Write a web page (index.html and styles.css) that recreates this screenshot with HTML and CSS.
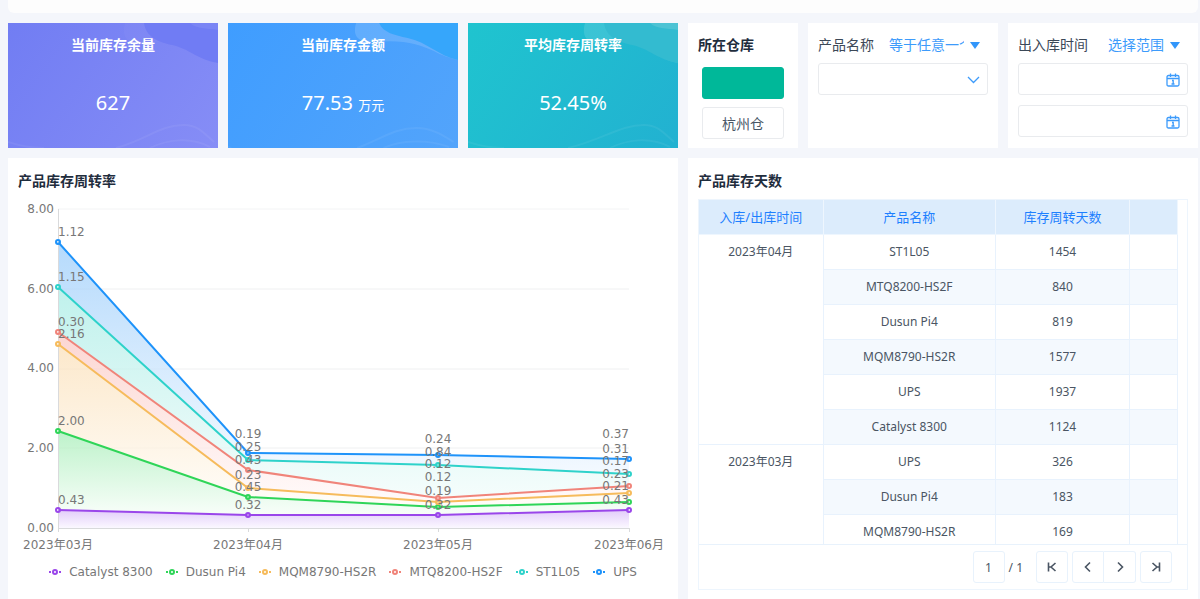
FILE: index.html
```html
<!DOCTYPE html>
<html lang="zh-CN">
<head>
  <meta charset="UTF-8">
  <meta name="viewport" content="width=device-width, initial-scale=1.0">
  <title>产品库存看板</title>
  <link rel="stylesheet" href="styles.css">
</head>
<body>

  <header class="topbar"></header>

  <main class="board">
    <section class="card card-purple">
      <svg class="wave" viewBox="0 0 210 125" preserveAspectRatio="none" aria-hidden="true">
        <path class="band" d="M117 0C113 14 120 22 134 20C160 16 176 22 188 30C196 36 203 39 210 40V0Z"/>
        <path class="pool" d="M136 0C138 14 150 19 164 22C182 26 190 37 210 40V0Z"/>
        <path class="tip" d="M182 0C188 6 198 5 210 7V0Z"/>
        <path class="line" d="M0 119C12 123 24 125 36 125M108 125C140 116 152 102 176 102C190 102 196 110 206 119M142 125C158 117 182 113 202 124"/>
      </svg>
      <h2>当前库存余量</h2>
      <p class="num">627</p>
    </section>

    <section class="card card-blue">
      <svg class="wave" viewBox="0 0 210 125" preserveAspectRatio="none" aria-hidden="true">
        <path class="band" d="M117 0C113 14 120 20 134 19C160 16 176 22 188 28C196 33 203 35 210 37V0Z"/>
        <path class="pool" d="M138 0C142 10 152 12 164 15C182 19 192 33 210 37V0Z"/>
        <path class="line" d="M0 124L3 125M118 125C140 116 152 105 172 105C186 105 196 112 206 119M142 125C158 117 182 116 202 124"/>
      </svg>
      <h2>当前库存金额</h2>
      <p class="num">77.53 <small>万元</small></p>
    </section>

    <section class="card card-teal">
      <svg class="wave" viewBox="0 0 210 125" preserveAspectRatio="none" aria-hidden="true">
        <path class="band" d="M117 0C113 14 120 22 134 20C160 16 176 22 188 30C196 36 203 39 210 40V0Z"/>
        <path class="pool" d="M136 0C138 14 150 19 164 22C182 26 190 37 210 40V0Z"/>
        <path class="tip" d="M182 0C188 6 198 5 210 7V0Z"/>
        <path class="line" d="M0 119C12 123 24 125 36 125M100 125C136 116 152 102 176 102C190 102 196 110 206 119M142 125C158 117 182 113 202 124"/>
      </svg>
      <h2>平均库存周转率</h2>
      <p class="num">52.45%</p>
    </section>

    <section class="filter">
      <h2>所在仓库</h2>
      <div class="tags">
        <button type="button" class="tag active" aria-label="全部仓库"></button>
        <button type="button" class="tag">杭州仓</button>
      </div>
    </section>

    <section class="filter">
      <div class="filter-head">
        <label for="product">产品名称</label>
        <button type="button" class="cond"><span>等于任意一个</span><i class="caret"></i></button>
      </div>
      <div class="field">
        <select id="product"><option></option></select>
        <svg class="field-icon" viewBox="0 0 14 14" aria-hidden="true"><path d="M2 4l5.500 5.500L13 4"/></svg>
      </div>
    </section>

    <section class="filter">
      <div class="filter-head">
        <label for="dateFrom">出入库时间</label>
        <button type="button" class="cond"><span>选择范围</span><i class="caret"></i></button>
      </div>
      <div class="field">
        <input type="text" id="dateFrom">
        <svg class="field-icon" viewBox="0 0 14 14" aria-hidden="true"><path d="M2.500 2.500h9q1.500 0 1.500 1.500v7.500q0 1.500-1.500 1.500h-9Q1 13 1 11.500V4q0-1.500 1.500-1.500zM1 5.500h12M4.500 .5v3.500M9.500 .5v3.500M6 7.500h1.200v3.500M5.500 11h3"/></svg>
      </div>
      <div class="field">
        <input type="text" id="dateTo" aria-label="结束时间">
        <svg class="field-icon" viewBox="0 0 14 14" aria-hidden="true"><path d="M2.500 2.500h9q1.500 0 1.500 1.500v7.500q0 1.500-1.500 1.500h-9Q1 13 1 11.500V4q0-1.500 1.500-1.500zM1 5.500h12M4.500 .5v3.500M9.500 .5v3.500M6 7.500h1.200v3.500M5.500 11h3"/></svg>
      </div>
    </section>

    <section class="panel panel-chart">
      <h2>产品库存周转率</h2>
      <svg class="chart" viewBox="0 0 670 358" role="img" aria-label="产品库存周转率">
        <defs>
          <linearGradient id="gUps" x1="0" y1="0" x2="0" y2="1"><stop offset="0" stop-color="#b5dafc"/><stop offset="1" stop-color="#f3f9ff"/></linearGradient>
          <linearGradient id="gSt" x1="0" y1="0" x2="0" y2="1"><stop offset="0" stop-color="#bff1ec"/><stop offset="1" stop-color="#f5fdfc"/></linearGradient>
          <linearGradient id="gMtq" x1="0" y1="0" x2="0" y2="1"><stop offset="0" stop-color="#fcd6d2"/><stop offset="1" stop-color="#fffafa"/></linearGradient>
          <linearGradient id="gMqm" x1="0" y1="0" x2="0" y2="1"><stop offset="0" stop-color="#fce8cb"/><stop offset="1" stop-color="#fffdf9"/></linearGradient>
          <linearGradient id="gPi" x1="0" y1="0" x2="0" y2="1"><stop offset="0" stop-color="#bdf2ca"/><stop offset="1" stop-color="#f8fef9"/></linearGradient>
          <linearGradient id="gCat" x1="0" y1="0" x2="0" y2="1"><stop offset="0" stop-color="#e2cdfa"/><stop offset="1" stop-color="#fbf8ff"/></linearGradient>
        </defs>

        <path class="grid" d="M50 9H621M50 89H621M50 169H621M50 248H621"/>

        <path fill="url(#gUps)" d="M50 42L240 253L430 255L621 259V274L430 265L240 260L50 87Z"/>
        <path fill="url(#gSt)" d="M50 87L240 260L430 265L621 274V286L430 298L240 270L50 132Z"/>
        <path fill="url(#gMtq)" d="M50 132L240 270L430 298L621 286V293L430 302L240 288L50 144Z"/>
        <path fill="url(#gMqm)" d="M50 144L240 288L430 302L621 293V302L430 307L240 297L50 231Z"/>
        <path fill="url(#gPi)" d="M50 231L240 297L430 307L621 302V310L430 315L240 315L50 310Z"/>
        <path fill="url(#gCat)" d="M50 310L240 315L430 315L621 310V328H50Z"/>
        <path class="grid over" d="M50 89H621M50 169H621M50 248H621"/>

        <path class="axis" d="M50.500 9V332M50 328.500H621M240.500 328V332M430.500 328V332M621.500 328V332"/>

        <g class="series c-cat"><path d="M50 310L240 315L430 315L621 310"/><circle cx="50" cy="310" r="2"/><circle cx="240" cy="315" r="2"/><circle cx="430" cy="315" r="2"/><circle cx="621" cy="310" r="2"/></g>
        <g class="series c-pi"><path d="M50 231L240 297L430 307L621 302"/><circle cx="50" cy="231" r="2"/><circle cx="240" cy="297" r="2"/><circle cx="430" cy="307" r="2"/><circle cx="621" cy="302" r="2"/></g>
        <g class="series c-mqm"><path d="M50 144L240 288L430 302L621 293"/><circle cx="50" cy="144" r="2"/><circle cx="240" cy="288" r="2"/><circle cx="430" cy="302" r="2"/><circle cx="621" cy="293" r="2"/></g>
        <g class="series c-mtq"><path d="M50 132L240 270L430 298L621 286"/><circle cx="50" cy="132" r="2"/><circle cx="240" cy="270" r="2"/><circle cx="430" cy="298" r="2"/><circle cx="621" cy="286" r="2"/></g>
        <g class="series c-st"><path d="M50 87L240 260L430 265L621 274"/><circle cx="50" cy="87" r="2"/><circle cx="240" cy="260" r="2"/><circle cx="430" cy="265" r="2"/><circle cx="621" cy="274" r="2"/></g>
        <g class="series c-ups"><path d="M50 42L240 253L430 255L621 259"/><circle cx="50" cy="42" r="2"/><circle cx="240" cy="253" r="2"/><circle cx="430" cy="255" r="2"/><circle cx="621" cy="259" r="2"/></g>

        <g class="end">
          <text x="46" y="13">8.00</text>
          <text x="46" y="93">6.00</text>
          <text x="46" y="172">4.00</text>
          <text x="46" y="252">2.00</text>
          <text x="46" y="332">0.00</text>
        </g>
        <g>
          <text x="50" y="36">1.12</text>
          <text x="50" y="81">1.15</text>
          <text x="50" y="126">0.30</text>
          <text x="50" y="138">2.16</text>
          <text x="50" y="225">2.00</text>
          <text x="50" y="304">0.43</text>
        </g>
        <g class="mid">
          <text x="240" y="238">0.19</text>
          <text x="240" y="251">0.25</text>
          <text x="240" y="264">0.43</text>
          <text x="240" y="279">0.23</text>
          <text x="240" y="291">0.45</text>
          <text x="240" y="309">0.32</text>
          <text x="430" y="243">0.24</text>
          <text x="430" y="256">0.84</text>
          <text x="430" y="268">0.12</text>
          <text x="430" y="281">0.12</text>
          <text x="430" y="295">0.19</text>
          <text x="430" y="309">0.32</text>
        </g>
        <g class="end">
          <text x="621" y="238">0.37</text>
          <text x="621" y="253">0.31</text>
          <text x="621" y="265">0.17</text>
          <text x="621" y="278">0.23</text>
          <text x="621" y="290">0.21</text>
          <text x="621" y="304">0.43</text>
        </g>
        <g class="mid">
          <text x="50" y="349">2023年03月</text>
          <text x="240" y="349">2023年04月</text>
          <text x="430" y="349">2023年05月</text>
          <text x="621" y="349">2023年06月</text>
        </g>
      </svg>

      <ul class="legend">
        <li class="c-cat"><svg viewBox="0 0 12 8"><path d="M0 4h2M10 4h2"/><circle cx="6" cy="4" r="2"/></svg>Catalyst 8300</li>
        <li class="c-pi"><svg viewBox="0 0 12 8"><path d="M0 4h2M10 4h2"/><circle cx="6" cy="4" r="2"/></svg>Dusun Pi4</li>
        <li class="c-mqm"><svg viewBox="0 0 12 8"><path d="M0 4h2M10 4h2"/><circle cx="6" cy="4" r="2"/></svg>MQM8790-HS2R</li>
        <li class="c-mtq"><svg viewBox="0 0 12 8"><path d="M0 4h2M10 4h2"/><circle cx="6" cy="4" r="2"/></svg>MTQ8200-HS2F</li>
        <li class="c-st"><svg viewBox="0 0 12 8"><path d="M0 4h2M10 4h2"/><circle cx="6" cy="4" r="2"/></svg>ST1L05</li>
        <li class="c-ups"><svg viewBox="0 0 12 8"><path d="M0 4h2M10 4h2"/><circle cx="6" cy="4" r="2"/></svg>UPS</li>
      </ul>
    </section>

    <section class="panel panel-table">
      <h2>产品库存天数</h2>
      <div class="table-box">
        <div class="table-scroll">
          <table>
            <colgroup><col class="col-date"><col class="col-name"><col class="col-days"><col></colgroup>
            <thead>
              <tr><th>入库/出库时间</th><th>产品名称</th><th>库存周转天数</th><th></th></tr>
            </thead>
            <tbody>
              <tr><td rowspan="6" class="date">2023年04月</td><td>ST1L05</td><td>1454</td><td></td></tr>
              <tr><td>MTQ8200-HS2F</td><td>840</td><td></td></tr>
              <tr><td>Dusun Pi4</td><td>819</td><td></td></tr>
              <tr><td>MQM8790-HS2R</td><td>1577</td><td></td></tr>
              <tr><td>UPS</td><td>1937</td><td></td></tr>
              <tr><td>Catalyst 8300</td><td>1124</td><td></td></tr>
              <tr><td rowspan="3" class="date">2023年03月</td><td>UPS</td><td>326</td><td></td></tr>
              <tr><td>Dusun Pi4</td><td>183</td><td></td></tr>
              <tr><td>MQM8790-HS2R</td><td>169</td><td></td></tr>
            </tbody>
          </table>
        </div>
        <div class="pager">
          <input type="text" value="1" aria-label="页码">
          <span>/ 1</span>
          <button type="button" aria-label="首页"><svg viewBox="0 0 12 12"><path d="M2.500 1.500v9M9.500 2L5 6l4.500 4M3 6h2"/></svg></button>
          <div class="pair">
            <button type="button" aria-label="上一页"><svg viewBox="0 0 12 12"><path d="M8 1.500L3.500 6 8 10.500"/></svg></button>
            <button type="button" aria-label="下一页"><svg viewBox="0 0 12 12"><path d="M4 1.500L8.500 6 4 10.500"/></svg></button>
          </div>
          <button type="button" aria-label="末页"><svg viewBox="0 0 12 12"><path d="M9.500 1.500v9M2.500 2L7 6l-4.500 4M7 6h2"/></svg></button>
        </div>
      </div>
    </section>
  </main>

</body>
</html>
```
FILE: styles.css
```css
* {
  box-sizing: border-box;
}

body {
  margin: 0;
  padding: 0 2px 0 8px;
  min-height: 100vh;
  display: flex;
  flex-direction: column;
  gap: 10px;
  background-color: #f4f6fb;
  color: #1f2d3d;
  font-family: "Noto Sans", "Noto Sans CJK SC", sans-serif;
  font-size: 14px;
}

h2, p, ul {
  margin: 0;
  padding: 0;
}

h2 {
  font-size: 14px;
  line-height: 22px;
  font-weight: bold;
}

button, input, select {
  font-family: inherit;
  font-size: 14px;
  color: #4a5766;
}

button {
  cursor: pointer;
}

.topbar {
  height: 13px;
  background-color: #fdfdfd;
  border-radius: 0 0 6px 6px;
}

.board {
  flex: 1;
  display: grid;
  grid-template-columns: 21fr 23fr 21fr 11fr 19fr 19fr;
  grid-template-rows: auto 1fr;
  gap: 10px;
}

/* 指标卡 */
.card {
  position: relative;
  min-height: 125px;
  padding-top: 11px;
  text-align: center;
  color: #fff;
}

.card-purple {
  background: linear-gradient(125deg, #717df3, #868df6);
}

.card-blue {
  background: linear-gradient(125deg, #3f9dff, #53a4fb);
}

.card-teal {
  background: linear-gradient(125deg, #1fc4cf, #22b1d1);
}

.card h2, .card .num {
  position: relative;
}

.num {
  margin-top: 32px;
  font-size: 20px;
  line-height: 30px;
}

.num small {
  font-size: 13px;
}

.wave {
  position: absolute;
  top: 0;
  left: 0;
  width: 100%;
  height: 100%;
}

.band {
  fill: #fff;
  fill-opacity: 0.08;
}

.line {
  fill: none;
  stroke: #fff;
  stroke-width: 2;
  stroke-opacity: 0.06;
}

.card-purple .pool {
  fill: #707cf4;
}

.card-purple .tip {
  fill: #7a85f5;
}

.card-purple .band {
  fill-opacity: 0.03;
}

.card-blue .pool {
  fill: #36a6fb;
}

.card-blue .band {
  fill-opacity: 0.14;
}

.card-teal .pool {
  fill: #33bbd0;
}

.card-teal .tip {
  fill: #4dc3d4;
}

.card-teal .band {
  fill-opacity: 0.12;
}

/* 筛选 */
.filter {
  padding: 11px 10px 9px;
  background-color: #fff;
}

.tags {
  display: flex;
  flex-direction: column;
  gap: 8px;
  padding: 11px 4px 0;
}

.tag {
  height: 32px;
  padding: 0;
  background-color: #fff;
  border: 1px solid #e9ebee;
  border-radius: 3px;
}

.tag.active {
  background-color: #00b899;
  border-color: #00b899;
}

.filter-head {
  display: flex;
  justify-content: space-between;
  gap: 8px;
  padding-right: 8px;
  line-height: 22px;
  color: #3c4857;
}

.filter-head label {
  white-space: nowrap;
}

.cond {
  display: flex;
  align-items: center;
  gap: 6px;
  padding: 0;
  border: none;
  background: none;
  color: #3d9bfb;
  line-height: 22px;
}

.cond span {
  max-width: 75px;
  overflow: hidden;
  white-space: nowrap;
}

.caret {
  border: 5px solid transparent;
  border-top: 7px solid #3296fa;
  border-bottom: 0;
}

.field {
  position: relative;
  margin-top: 10px;
}

.filter-head + .field {
  margin-top: 7px;
}

.field input, .field select {
  display: block;
  width: 100%;
  height: 32px;
  padding: 0 30px 0 8px;
  background-color: #fff;
  border: 1px solid #e9ebee;
  border-radius: 3px;
  appearance: none;
}

.field-icon {
  position: absolute;
  top: 10px;
  right: 8px;
  width: 14px;
  height: 14px;
  fill: none;
  stroke: #3d9bfb;
  stroke-width: 1.3;
  pointer-events: none;
}

/* 图表 */
.panel {
  background-color: #fff;
  padding-top: 12px;
}

.panel h2 {
  padding: 0 10px;
}

.panel-chart {
  grid-column: span 3;
}

.panel-table {
  grid-column: span 3;
}

.chart {
  display: block;
  width: 100%;
  margin-top: 8px;
}

.chart text, .legend {
  font-family: "DejaVu Sans", "Noto Sans CJK SC", sans-serif;
  font-size: 12px;
  fill: #777;
  color: #777;
}

.grid, .axis {
  fill: none;
  stroke: #f3f4f5;
}

.grid.over {
  stroke: rgba(0, 0, 0, 0.02);
}

.axis {
  stroke: #d9dadc;
}

.end {
  text-anchor: end;
}

.mid {
  text-anchor: middle;
}

.c-cat { stroke: #9a46ea; }
.c-pi { stroke: #2fd558; }
.c-mqm { stroke: #f6bb5c; }
.c-mtq { stroke: #f0847a; }
.c-st { stroke: #2ed2ca; }
.c-ups { stroke: #1e93fa; }

.series path {
  fill: none;
  stroke-width: 2;
}

.series circle {
  fill: #fff;
  fill-opacity: 0.4;
  stroke-width: 2;
}

.legend {
  display: flex;
  justify-content: center;
  flex-wrap: wrap;
  gap: 13px;
  list-style: none;
  line-height: 18px;
  padding-top: 5px;
}

.legend li {
  display: flex;
  align-items: center;
  gap: 8px;
}

.legend svg {
  width: 12px;
  height: 8px;
  stroke-width: 2;
}

.legend circle {
  fill: #fff;
}

/* 表格 */
.table-box {
  margin: 7px 10px 10px;
  border: 1px solid #edf5fd;
}

.table-scroll {
  height: 345px;
  padding-right: 9px;
  overflow: hidden;
  border-bottom: 1px solid #e8f2fc;
}

table {
  width: 100%;
  table-layout: fixed;
  border-collapse: separate;
  border-spacing: 0;
  text-align: center;
}

.col-date { width: 26%; }
.col-name { width: 36%; }
.col-days { width: 28%; }

th, td {
  height: 35px;
  padding: 0;
  border-right: 1px solid #e8f2fd;
  border-bottom: 1px solid #e8f2fd;
  font-size: 12px;
  line-height: 18px;
  color: #4a5563;
}

th {
  background-color: #dcecfc;
  border-color: #eef6fe;
  font-size: 13px;
  font-weight: normal;
  color: #1e80ff;
}

tbody tr:nth-child(even) td {
  background-color: #f4f9fe;
}

tbody .date {
  padding-top: 8px;
  vertical-align: top;
}

.pager {
  display: flex;
  justify-content: flex-end;
  align-items: center;
  gap: 4px;
  padding: 6px 15px;
  font-size: 12px;
  color: #4a5563;
}

.pager input, .pager button {
  width: 32px;
  height: 32px;
  padding: 0;
  background-color: #fff;
  border: 1px solid #e8f2fc;
  border-radius: 3px;
  text-align: center;
  font-size: 12px;
}

.pager span {
  margin-right: 9px;
}

.pair {
  display: flex;
}

.pair button:first-child {
  border-radius: 3px 0 0 3px;
}

.pair button + button {
  border-left: none;
  border-radius: 0 3px 3px 0;
}

.pager svg {
  display: block;
  width: 12px;
  height: 12px;
  margin: 0 auto;
  fill: none;
  stroke: #4a5563;
  stroke-width: 1.6;
}
```
